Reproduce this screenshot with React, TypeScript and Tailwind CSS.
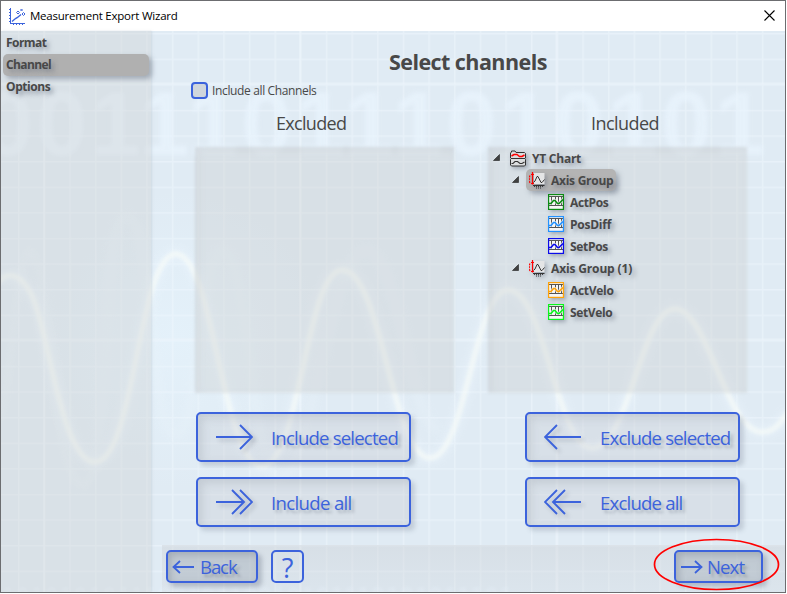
import type { ReactNode } from "react";

const BLUE = "#3c63dc";

function Backdrop() {
  const wave =
    "M-2 283C5 272 18 272 29 290C48 320 60 462 95 462C135 462 138 254 176 254C214 254 222 466 262 466C300 466 306 270 342 270C382 270 392 458 430 458C466 458 474 290 508 290C546 290 556 448 592 448C630 448 640 309 675 309C708 309 726 432 762 432C774 432 780 424 788 412";
  const ghost =
    "M-5 420C10 440 14 250 30 250C50 250 50 486 84 486C110 486 100 215 126 215C155 215 148 436 176 436C200 436 200 250 222 250C250 250 250 480 280 480C310 480 330 250 366 250C400 250 410 430 440 430";
  return (
    <svg className="absolute inset-0" width="787" height="594" viewBox="0 0 787 594" aria-hidden="true">
      <defs>
        <pattern id="grid" x="18" y="33" width="25.65" height="25.6" patternUnits="userSpaceOnUse">
          <path d="M0.75 0V25.6M0 0.75H25.65" stroke="#eff7fd" strokeOpacity=".5" strokeWidth="1.5" />
        </pattern>
        <radialGradient id="glow" cx="176" cy="340" r="150" gradientUnits="userSpaceOnUse">
          <stop offset="0" stopColor="#e4f1fa" />
          <stop offset="1" stopColor="#e4f1fa" stopOpacity="0" />
        </radialGradient>
        <filter id="soft"><feGaussianBlur stdDeviation="1.6" /></filter>
        <filter id="digits"><feGaussianBlur stdDeviation="2" /></filter>
        <filter id="softer"><feGaussianBlur stdDeviation="4" /></filter>
      </defs>
      <rect width="787" height="594" fill="#e0ebf4" />
      <rect width="787" height="594" fill="url(#glow)" />
      <rect width="787" height="594" fill="url(#grid)" />
      <path d="M44 31V593M300 31V593M556.5 31V593M0 83.5H787M0 339.5H787" stroke="#edf5fc" strokeWidth="2" opacity=".6" />
      <g fill="#eaf5fe" fontFamily="Liberation Sans, sans-serif" fontWeight="700">
        <text x="-17" y="155" fontSize="90" textLength="782" opacity=".68" filter="url(#digits)">001110111010101</text>
        <text x="2" y="602" fontSize="22" textLength="510" opacity=".5" filter="url(#soft)">101010101110010110010101110101011101</text>
      </g>
      <path d={ghost} fill="none" stroke="#eaf4fb" strokeWidth="9" opacity=".35" filter="url(#softer)" />
      <path d={wave} fill="none" stroke="#eff8ff" strokeWidth="10" opacity=".45" filter="url(#softer)" />
      <path d={wave} fill="none" stroke="#f8fcf8" strokeWidth="5.5" opacity=".6" filter="url(#soft)" />
    </svg>
  );
}

function AppIcon() {
  return (
    <svg width="17" height="17" viewBox="0 0 17 17" fill="none" stroke={BLUE} shapeRendering="crispEdges">
      <path d="M1.5 0V15.5H16" />
      <path d="M0 1.5H1M0 4.5H1M0 7.5H1M0 10.5H1M0 13.5H1M4.5 16V17M7.5 16V17M10.5 16V17M13.5 16V17" />
      <path d="M3 13.5L6.5 10.5L8.5 9.5L12 6.5" shapeRendering="auto" strokeWidth="1.4" />
      <path d="M7.5 4.5L9 3L10.5 4.5L9 6ZM11.5 2L12.5 1L13.5 2L12.5 3ZM13 6L14.5 4.5L16 6L14.5 7.5Z" shapeRendering="auto" />
    </svg>
  );
}

function ChartIcon() {
  return (
    <svg width="16" height="17" viewBox="0 0 16 17" fill="none">
      <path d="M1.5 2V1H5L6 2.5H14.5L15.5 3.5V8L14.5 8.5L15.5 9.5V15L14.5 16H1.5L.5 15V9.5L1.5 8.5L.5 8V3Z" fill="#dcdedf" stroke="#333" />
      <path d="M1 8.5H15" stroke="#333" />
      <path d="M1.5 6L4 4.5H7L9.5 6.5H12L14.5 5" stroke="#f00" strokeWidth="1.5" />
      <path d="M1.5 13.5H3L5 11.5H7.5L10 13.5H12L14.5 12" stroke="#333" strokeWidth="1.1" />
    </svg>
  );
}

function AxisIcon() {
  return (
    <svg width="16" height="17" viewBox="0 0 16 17" fill="none">
      <path d="M5 1H15.5V12H5Z" fill="#e4e5e6" />
      <path d="M3.5 0V12.5M2 2.5H5M2 11.5H5" stroke="#f00" strokeWidth="1.2" />
      <path d="M1 3.5C0 5.5 0 9 1 11" stroke="#f00" strokeWidth="1.2" strokeDasharray="2 .8" />
      <path d="M4.5 10.5L6 9L8 4.5H9L12 10.5H13L15.5 7.5" stroke="#333" />
      <path d="M4 13.5H15.5" stroke="#333" />
      <path d="M5.5 13V15M7.5 13V15M9.5 13V15M11.5 13V15M13.5 13V15" stroke="#333" strokeWidth=".9" />
      <path d="M7 16H12" stroke="#333" strokeDasharray="1 1" />
    </svg>
  );
}

function SignalIcon({ color }: { color: string }) {
  return (
    <svg width="16" height="16" viewBox="0 0 16 16" fill="none">
      <rect width="16" height="16" fill="#f6f6f6" />
      <path d="M1 2.5H15M1 11.5H15" stroke="#555" />
      <path d="M3.5 2V12M7.5 2V12M10.5 2V12M13.5 2V12" stroke="#555" />
      <path d="M1 9.5H3L5.5 6.5H7L9.5 9.5H11L15 5.5" stroke="#f6f6f6" strokeWidth="3.2" opacity=".7" />
      <path d="M1 9.5H3L5.5 6.5H7L9.5 9.5H11L15 5.5" stroke={color} strokeWidth="1.7" />
      <rect x=".6" y=".6" width="14.8" height="14.8" stroke={color} strokeWidth="1.2" />
    </svg>
  );
}

function TreeRow({ indent, open, selected, icon, label, track }: {
  indent: string; open?: boolean; selected?: boolean; icon: ReactNode; label: string; track: string;
}) {
  return (
    <div className={`flex h-[22px] items-center ${indent}`}>
      <svg className="mr-[7px] mb-[2px] shrink-0" width="7" height="7" viewBox="0 0 7 7">
        {open && <path d="M.5 6.5H6.5V.5Z" fill="#404040" stroke="#222" strokeWidth=".6" />}
      </svg>
      <div className={`flex h-[22px] items-center gap-[6px] rounded-[5px] pr-[3px] pl-[3px] ${selected ? "bg-[#b4b4b4] shadow-[3px_3px_5px_rgba(110,120,135,0.5)]" : ""}`}>
        <span className="drop-shadow-[2px_2px_2px_rgba(100,110,125,0.5)]">{icon}</span>
        <span className={`pt-[2px] text-[12px] leading-none font-bold whitespace-nowrap [text-shadow:3px_3px_4px_rgba(100,110,125,0.55)] ${track}`}>{label}</span>
      </div>
    </div>
  );
}

function Panel({ children }: { children?: ReactNode }) {
  return (
    <div className="relative h-[246px] w-[259px]">
      <div className="absolute inset-0 bg-[rgba(203,205,207,0.37)] blur-[1.5px] shadow-[inset_3px_3px_8px_rgba(170,175,185,0.2)]" />
      <div className="relative">{children}</div>
    </div>
  );
}

function BigButton({ d, label, track }: { d: string; label: string; track: string }) {
  return (
    <button className="flex h-[50px] w-[215px] items-center rounded-[5px] border-2 border-[#3c63dc] bg-[rgba(201,204,208,0.35)] pl-[17px] text-[#3c63dc] shadow-[4px_4px_4px_rgba(130,140,155,0.3),inset_4px_4px_8px_rgba(150,155,165,0.3)]">
      <svg className="shrink-0 drop-shadow-[3px_3px_2px_rgba(100,110,125,0.35)]" width="38" height="28" viewBox="0 0 38 28" fill="none" stroke={BLUE} strokeWidth="1.9">
        <path d={d} />
      </svg>
      <span className={`ml-[18px] pt-[3px] text-[18.6px] leading-none whitespace-nowrap [text-shadow:3px_3px_3px_rgba(100,110,125,0.4)] ${track}`}>{label}</span>
    </button>
  );
}

const NAV = "flex h-[22px] w-[146px] items-center rounded-[5px] pl-[3px] text-[12px] font-bold [text-shadow:3px_3px_4px_rgba(100,110,125,0.55)]";
const SMALL = "flex h-[33px] items-center rounded-[5px] border-2 border-[#3c63dc] text-[18.6px] leading-none text-[#3c63dc]";
const SHADE = "bg-[rgba(170,180,190,0.5)] shadow-[4px_4px_4px_rgba(130,140,155,0.45),inset_3px_3px_7px_rgba(120,128,140,0.4)] [text-shadow:3px_3px_3px_rgba(90,100,115,0.45)]";

export default function App() {
  return (
    <div className="relative flex h-[593px] w-[786px] flex-col overflow-hidden border border-[#6c6d70] font-['Open_Sans','Noto_Sans',sans-serif] text-[#484848]">
      <div className="absolute -top-px -left-px h-[594px] w-[787px]"><Backdrop /></div>
      <header className="relative flex h-[30px] shrink-0 items-center bg-white pr-[10px] pl-[8px] text-black">
        <AppIcon />
        <span className="ml-1 text-[11.5px] tracking-[-0.02em]">Measurement Export Wizard</span>
        <svg className="mb-px ml-auto" width="11" height="11" viewBox="0 0 11 11" stroke="#000" strokeWidth="1.1"><path d="M.5.5L10.5 10.5M10.5.5L.5 10.5" /></svg>
      </header>
      <div className="relative flex min-h-0 flex-1">
        <nav className="flex w-[150px] shrink-0 flex-col bg-[rgba(203,205,207,0.35)] pt-[1px] pl-[2px] shadow-[1px_0_2px_rgba(190,200,210,0.5)]">
          <div className={`${NAV} tracking-[-0.045em]`}>Format</div>
          <div className={`${NAV} bg-[#b0b0b0] tracking-[-0.05em] shadow-[3px_3px_5px_rgba(110,120,135,0.5)]`}>Channel</div>
          <div className={`${NAV} tracking-[-0.035em]`}>Options</div>
        </nav>
        <main className="flex min-w-0 flex-1 flex-col">
          <h1 className="mt-[14px] pl-[238px] text-[21.5px] leading-[34px] font-bold tracking-[-0.026em] whitespace-nowrap">Select channels</h1>
          <label className="mt-[3px] flex h-[17px] items-center gap-[4px] pl-[40px] text-[12px]">
            <span className="size-[17px] rounded-[4px] border-2 border-[#3c63dc] bg-[#d0d6dc]" />
            <span className="tracking-[-0.03em]">Include all Channels</span>
          </label>
          <div className="mt-[11px] flex h-[26px] items-center text-[18px]">
            <h2 className="ml-[125px] w-[315px] tracking-[-0.038em]">Excluded</h2>
            <h2 className="tracking-[-0.03em]">Included</h2>
          </div>
          <div className="mt-[11px] flex gap-[34px] pl-[44px]">
            <Panel />
            <Panel>
              <TreeRow indent="pl-[5px]" open icon={<ChartIcon />} label="YT Chart" track="tracking-[-0.02em]" />
              <TreeRow indent="pl-[24px]" open selected icon={<AxisIcon />} label="Axis Group" track="tracking-[-0.022em]" />
              <TreeRow indent="pl-[43px]" icon={<SignalIcon color="#0c8a14" />} label="ActPos" track="tracking-[-0.03em]" />
              <TreeRow indent="pl-[43px]" icon={<SignalIcon color="#2492ff" />} label="PosDiff" track="tracking-[-0.02em]" />
              <TreeRow indent="pl-[43px]" icon={<SignalIcon color="#0b0bea" />} label="SetPos" track="tracking-[-0.025em]" />
              <TreeRow indent="pl-[24px]" open icon={<AxisIcon />} label="Axis Group (1)" track="tracking-[-0.012em]" />
              <TreeRow indent="pl-[43px]" icon={<SignalIcon color="#ffa30a" />} label="ActVelo" track="tracking-[-0.025em]" />
              <TreeRow indent="pl-[43px]" icon={<SignalIcon color="#0af51c" />} label="SetVelo" track="tracking-[-0.03em]" />
            </Panel>
          </div>
          <div className="mt-[19px] grid grid-cols-[215px_215px] gap-x-[114px] gap-y-[15px] pl-[45px]">
            <BigButton d="M1 14H37M25 2L37 14L25 26" label="Include selected" track="tracking-[-0.044em]" />
            <BigButton d="M37 14H1M13 2L1 14L13 26" label="Exclude selected" track="tracking-[-0.044em]" />
            <BigButton d="M1 14H29M17 2L29 14L17 26M25 2L37 14L25 26" label="Include all" track="tracking-[-0.036em]" />
            <BigButton d="M37 14H9M13 2L1 14L13 26M21 2L9 14L21 26" label="Exclude all" track="tracking-[-0.044em]" />
          </div>
          <footer className="mt-auto ml-[11px] flex h-[47px] bg-linear-to-b from-[rgba(201,204,208,0.38)] to-[rgba(201,204,208,0.2)] pt-[5px] pr-[10px] pl-[4px]">
            <button className={`${SMALL} ${SHADE} w-[92px]`}>
              <svg className="ml-[4px]" width="23" height="14" viewBox="0 0 23 14" fill="none" stroke={BLUE} strokeWidth="1.8"><path d="M22 7H1.5M8 1L1.5 7L8 13" /></svg>
              <span className="ml-[5px] pt-[2px] tracking-[-0.06em]">Back</span>
            </button>
            <button className={`${SMALL} ml-[13px] w-[33px] justify-center`}><span className="pt-px text-[27px]">?</span></button>
            <button className={`${SMALL} ${SHADE} mr-[12px] ml-auto w-[89px]`}>
              <svg className="ml-[4px]" width="23" height="14" viewBox="0 0 23 14" fill="none" stroke={BLUE} strokeWidth="1.8"><path d="M1 7H21.5M15 1L21.5 7L15 13" /></svg>
              <span className="ml-[4px] pt-[2px] tracking-[-0.05em]">Next</span>
            </button>
          </footer>
        </main>
      </div>
      <svg className="pointer-events-none absolute top-[537px] left-[652px]" width="128" height="54" viewBox="0 0 128 54" fill="none">
        <ellipse cx="63.5" cy="26.5" rx="62" ry="25" stroke="#f00" strokeWidth="1.7" />
      </svg>
    </div>
  );
}
